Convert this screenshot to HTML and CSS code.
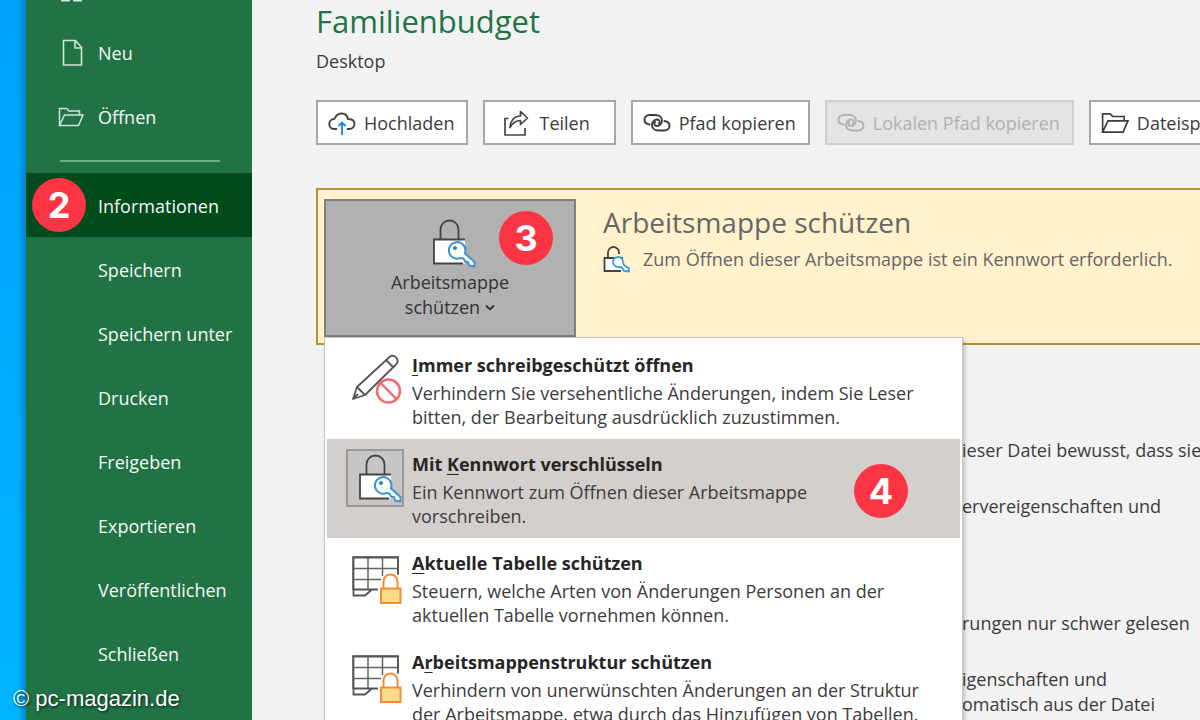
FILE: index.html
```html
<!DOCTYPE html>
<html lang="de">
<head>
<meta charset="utf-8">
<meta name="viewport" content="width=device-width, initial-scale=1">
<title>Familienbudget – Informationen</title>
<link rel="stylesheet" href="styles.css">
</head>
<body>
<svg class="sprite" aria-hidden="true">
  <symbol id="folder" viewBox="0 0 26 20">
    <path d="M1.500 18.500v-17h7l2.500 2.500h10.500v4M1.500 18.500 6.500 8H25l-4.500 10.500z" fill="none" stroke="currentColor" stroke-width="1.500"/>
  </symbol>
  <symbol id="link" viewBox="0 0 28 20">
    <g fill="none" stroke="currentColor" stroke-width="1.900" stroke-linecap="round">
      <path d="M6.500 11.500C3 11 1.500 9 1.500 6.700 1.500 4 3.500 2 6.500 2h6c4 0 6.500 2.500 6.500 5.500s-2.500 5.500-5 5.500c-2.600 0-3.500-2.300-2-4"/>
      <path d="M21.500 8c3.500.5 5 2.500 5 4.800 0 2.700-2 4.700-5 4.700h-6c-4 0-6.500-2.500-6.500-5.500s2.500-5.500 5-5.500c2.600 0 3.500 2.300 2 4"/>
    </g>
  </symbol>
  <symbol id="lock-key" viewBox="0 0 44 50">
    <path d="M8.500 21V11.500a9 9 0 0 1 18 0V21" fill="none" stroke="#444" stroke-width="1.800"/>
    <path d="M2 21.500h31v24H2z" fill="#fff"/>
    <path d="M33 21.500H2v24h29" fill="none" stroke="#444" stroke-width="1.800"/>
    <path d="M33.500 32.500a8.300 8.300 0 1 0-5 7.500l3 .5 1.500 3 3 .5 1 3.500 5.500 1v-4.500l-9.500-8.500z" fill="#fff" stroke="#3c93d0" stroke-width="2" stroke-linejoin="round"/>
    <circle cx="23" cy="30" r="2" fill="#2b7fc0"/>
  </symbol>
  <symbol id="sheet-lock" viewBox="0 0 50 50">
    <path d="M1 34V1h45v18M1 12.500h45M1 23.500h28M16 1v33M30.500 1v19" fill="none" stroke="#666" stroke-width="1.500"/>
    <path d="M46 18V1.500H1.500v38H13l7-6h6M1.500 33.500H20" fill="none" stroke="#555" stroke-width="1.800"/>
    <path d="M31.500 32v-6.500a7 7 0 0 1 14 0V32" fill="#fff" stroke="#ef8e35" stroke-width="2"/>
    <path d="M29 32.500h19.500v14.500H29z" fill="#fbdc8b" stroke="#ef8e35" stroke-width="2"/>
  </symbol>
</svg>

<div class="app">
  <div class="desktop"></div>
  <nav class="sidebar" aria-label="Datei">
    <ul class="nav-list">
      <li><a class="nav-item" href="#start" aria-label="Startseite">
        <svg class="nav-icon" viewBox="0 0 28 28" fill="none" stroke="currentColor" stroke-width="1.800"><path d="M4 12v13.500h7V16h5v9.500h7V12M1 14 13.500 3 26 14"/></svg>
      </a></li>
      <li><a class="nav-item" href="#neu">
        <svg class="nav-icon" viewBox="0 0 28 28" fill="none" stroke="currentColor" stroke-width="1.600"><path d="M5.500 1.500h12l6 7v17.500h-18zM17 1.500V9h6.500"/></svg>
        Neu</a></li>
      <li><a class="nav-item" href="#oeffnen"><svg class="nav-icon folder"><use href="#folder"/></svg>Öffnen</a></li>
      <li class="nav-rule"></li>
      <li><a class="nav-item active" href="#info" aria-current="page">Informationen<span class="badge badge-nav">2</span></a></li>
      <li><a class="nav-item" href="#speichern">Speichern</a></li>
      <li><a class="nav-item" href="#speichern-unter">Speichern unter</a></li>
      <li><a class="nav-item" href="#drucken">Drucken</a></li>
      <li><a class="nav-item" href="#freigeben">Freigeben</a></li>
      <li><a class="nav-item" href="#export">Exportieren</a></li>
      <li><a class="nav-item" href="#publish">Veröffentlichen</a></li>
      <li><a class="nav-item" href="#schliessen">Schließen</a></li>
    </ul>
  </nav>

  <main class="content">
    <h1 class="title">Familienbudget</h1>
    <p class="location">Desktop</p>

    <div class="toolbar">
      <button class="tool" type="button">
        <svg class="tool-icon" viewBox="0 0 28 24" fill="none"><path d="M9 18H6.500a5 5 0 0 1-.5-10C7.500 8 7 3 13 2.500c4.500-.3 6.500 3 7 5.500 4 0 6.500 2 6.500 5s-2.500 5-5 5H19" stroke="#444" stroke-width="1.900"/><path d="M14 24V11.500M10.500 15l3.500-3.500 3.500 3.500" stroke="#1e88dc" stroke-width="1.900"/></svg>
        Hochladen</button>
      <button class="tool wide" type="button">
        <svg class="tool-icon" viewBox="0 0 28 26" fill="none" stroke="#444" stroke-width="1.700"><path d="M5.500 8.500H2v16.500h20v-7"/><path d="M7 17.500C7.500 11 11 6 17.500 6V1.500l7 6.500-7 6.500V10.500C13 10.500 9.500 13 7 17.500z" stroke-linejoin="round"/></svg>
        Teilen</button>
      <button class="tool" type="button"><svg class="tool-icon"><use href="#link"/></svg>Pfad kopieren</button>
      <button class="tool" type="button" disabled><svg class="tool-icon"><use href="#link"/></svg>Lokalen Pfad kopieren</button>
      <button class="tool" type="button"><svg class="tool-icon"><use href="#folder"/></svg>Dateispeicherort öffnen</button>
    </div>

    <section class="protect">
      <div class="protect-anchor">
        <button class="protect-button" type="button" aria-haspopup="menu" aria-expanded="true">
          <svg class="lock-icon"><use href="#lock-key"/></svg>
          <span>Arbeitsmappe</span>
          <span class="with-chevron">schützen
            <svg class="chevron" viewBox="0 0 10 8" fill="none" stroke="#333" stroke-width="1.800"><path d="m1 1.500 4 4 4-4"/></svg></span>
        </button>
        <span class="badge badge-protect">3</span>

        <div class="menu" role="menu">
          <button class="menu-item" type="button" role="menuitem">
            <span class="menu-icon"><svg class="menu-art" viewBox="0 0 50 50" fill="none"><path d="m1 45 4-12L37.500 3a5 5 0 0 1 7 7L13 41zM5 33l8 8M1 45l5-5M34 6l7.500 7.500" stroke="#555" stroke-width="1.800" stroke-linejoin="round"/><circle cx="36.500" cy="37" r="11.500" fill="#fff" stroke="#f4696b" stroke-width="2.400"/><path d="m28.500 29 16 16" stroke="#f4696b" stroke-width="2.400"/></svg></span>
            <span class="menu-text"><strong><u>I</u>mmer schreibgeschützt öffnen</strong><span>Verhindern Sie versehentliche Änderungen, indem Sie Leser<br>bitten, der Bearbeitung ausdrücklich zuzustimmen.</span></span>
          </button>
          <button class="menu-item selected" type="button" role="menuitem">
            <span class="menu-icon framed"><svg class="lock-icon"><use href="#lock-key"/></svg></span>
            <span class="menu-text"><strong>Mit <u>K</u>ennwort verschlüsseln</strong><span>Ein Kennwort zum Öffnen dieser Arbeitsmappe<br>vorschreiben.</span></span>
            <span class="badge badge-menu">4</span>
          </button>
          <button class="menu-item" type="button" role="menuitem">
            <span class="menu-icon low"><svg class="menu-art"><use href="#sheet-lock"/></svg></span>
            <span class="menu-text"><strong><u>A</u>ktuelle Tabelle schützen</strong><span>Steuern, welche Arten von Änderungen Personen an der<br>aktuellen Tabelle vornehmen können.</span></span>
          </button>
          <button class="menu-item" type="button" role="menuitem">
            <span class="menu-icon low"><svg class="menu-art"><use href="#sheet-lock"/></svg></span>
            <span class="menu-text"><strong>A<u>r</u>beitsmappenstruktur schützen</strong><span>Verhindern von unerwünschten Änderungen an der Struktur<br>der Arbeitsmappe, etwa durch das Hinzufügen von Tabellen.</span></span>
          </button>
        </div>
      </div>
      <div class="protect-info">
        <h2 class="protect-title">Arbeitsmappe schützen</h2>
        <p class="protect-status">
          <svg class="status-icon" viewBox="0 0 28 28" fill="none"><path d="M5 13V7.500a5.500 5.500 0 0 1 11 0V9" stroke="#444" stroke-width="1.800"/><path d="M20 13H1.500v13H18" fill="#fff" stroke="#444" stroke-width="1.800"/><path d="M20 17.500a5 5 0 1 0-5 4.500l4 .5 2 3.500 5 .500v-3l-5-3.500z" fill="#fff" stroke="#39a0e0" stroke-width="1.800" stroke-linejoin="round"/></svg>
          Zum Öffnen dieser Arbeitsmappe ist ein Kennwort erforderlich.</p>
      </div>
    </section>

    <div class="details">
      <p>ieser Datei bewusst, dass sie</p>
      <p>ervereigenschaften und</p>
      <p class="new-group">rungen nur schwer gelesen</p>
      <p>igenschaften und<br>omatisch aus der Datei</p>
    </div>
  </main>
</div>
<div class="credit">© pc-magazin.de</div>
</body>
</html>
```

FILE: styles.css
```css
* { box-sizing: border-box; }

body {
  margin: 0;
  overflow: hidden;
  background: #f2f2f2;
  color: #3c3c3c;
  font: 500 18px/25px "Open Sans", "Noto Sans", sans-serif;
}

h1, h2, p, ul { margin: 0; padding: 0; }
button { font: inherit; color: inherit; }
.sprite { position: absolute; width: 0; height: 0; }

.app { display: flex; height: 100vh; overflow: hidden; }

.desktop {
  flex: 0 0 26px;
  background: linear-gradient(to right, transparent 18px, #00508066), linear-gradient(#00a2fa, #00b4ff);
}

/* Sidebar */
.sidebar { flex: 0 0 226px; background: #217346; }
.nav-list { list-style: none; margin-top: -43px; }
.nav-item {
  position: relative;
  display: flex;
  align-items: center;
  height: 64px;
  padding-left: 72px;
  color: #f4f8f5;
  text-decoration: none;
  white-space: nowrap;
}
.nav-item.active { background: #004b1c; }
.nav-icon { width: 28px; height: 28px; margin: 0 12px 0 -40px; color: #d3e3d9; }
.nav-icon.folder { width: 26px; height: 20px; margin-right: 14px; }
.nav-rule { height: 24px; padding: 11px 32px 0 34px; }
.nav-rule::before { content: ""; display: block; height: 2px; background: #68ad86; }
.nav-rule ~ li .nav-item { padding-top: 3px; }

.badge {
  position: absolute;
  display: grid;
  place-items: center;
  width: 54px;
  height: 54px;
  border-radius: 50%;
  background: #fb3544;
  color: #fff;
  font: 700 36px/54px Inter, sans-serif;
}
.badge-nav { left: 6px; top: 5px; }
.badge-protect { right: 23px; top: 12px; }
.badge-menu { right: 52px; top: 25px; }

/* Content */
.content { flex: 1; min-width: 0; padding-left: 64px; overflow: hidden; }
.title { color: #217346; font-size: 31px; line-height: 42px; font-weight: 400; }
.location { margin-top: 7px; }

.toolbar { display: flex; gap: 15px; margin-top: 26px; }
.tool {
  display: flex;
  flex: none;
  align-items: center;
  gap: 8px;
  height: 45px;
  padding: 2px 12px 0 10px;
  border: 2px solid #a6a6a6;
  background: #fff;
  white-space: nowrap;
}
.tool.wide { padding: 2px 24px 0 18px; }
.tool:disabled { background: #e4e4e4; border-color: #cfcfcf; color: #b1b1b1; }
.tool-icon { width: 28px; height: 26px; margin-top: -2px; }

.protect {
  display: flex;
  gap: 27px;
  margin-top: 43px;
  padding: 9px 0 6px 6px;
  border: 2px solid #b98f3e;
  border-right: 0;
  background: #fff2cc;
}
.protect-anchor { position: relative; flex: 0 0 252px; }
.protect-button {
  display: flex;
  flex-direction: column;
  align-items: center;
  width: 100%;
  height: 138px;
  padding: 17px 0 0;
  border: 2px solid #808080;
  background: #b1b1b1;
  color: #333;
}
.lock-icon { width: 44px; height: 50px; margin: 0 0 2px 8px; }
.with-chevron { display: flex; align-items: center; gap: 5px; }
.chevron { width: 10px; height: 8px; }
.protect-info { color: #666; white-space: nowrap; }
.protect-title { font-size: 28px; line-height: 40px; font-weight: 400; margin-top: 3px; }
.protect-status { display: flex; align-items: center; gap: 12px; margin-top: 2px; line-height: 30px; }
.status-icon { width: 28px; height: 28px; }

/* Drop-down menu */
.menu {
  position: absolute;
  z-index: 2;
  top: 100%;
  left: 0;
  width: 639px;
  padding: 2px;
  border: 1px solid #c6c6c6;
  background: #fff;
  box-shadow: 2px 2px 4px #0003;
}
.menu-item {
  position: relative;
  display: flex;
  gap: 8px;
  width: 100%;
  height: 99px;
  padding: 10px 0 0 19px;
  border: 0;
  background: none;
  text-align: left;
  line-height: 24px;
  white-space: nowrap;
}
.menu-item.selected { background: #d2cfcd; }
.menu-icon { display: grid; place-items: center end; width: 58px; height: 58px; padding-right: 2px; }
.menu-icon.low { align-items: end; }
.menu-icon.framed { padding: 0; border: 2px solid #999; background: #c6c6c6; }
.menu-icon .lock-icon { margin: 0; }
.menu-art { width: 50px; height: 50px; }
.menu-text { display: flex; flex-direction: column; gap: 4px; padding-top: 3px; }
.menu-text strong { color: #262626; }
.menu-text u { text-underline-offset: 3px; }

.details { display: flex; flex-direction: column; gap: 31px; padding: 93px 0 0 646px; white-space: nowrap; }
.details .new-group { margin-top: 61px; }

.credit {
  position: absolute;
  z-index: 3;
  left: 13px;
  bottom: 8px;
  color: #fff;
  font: 22px/26px "Liberation Sans", sans-serif;
  text-shadow: 1px 1px 3px #000c;
}
```
